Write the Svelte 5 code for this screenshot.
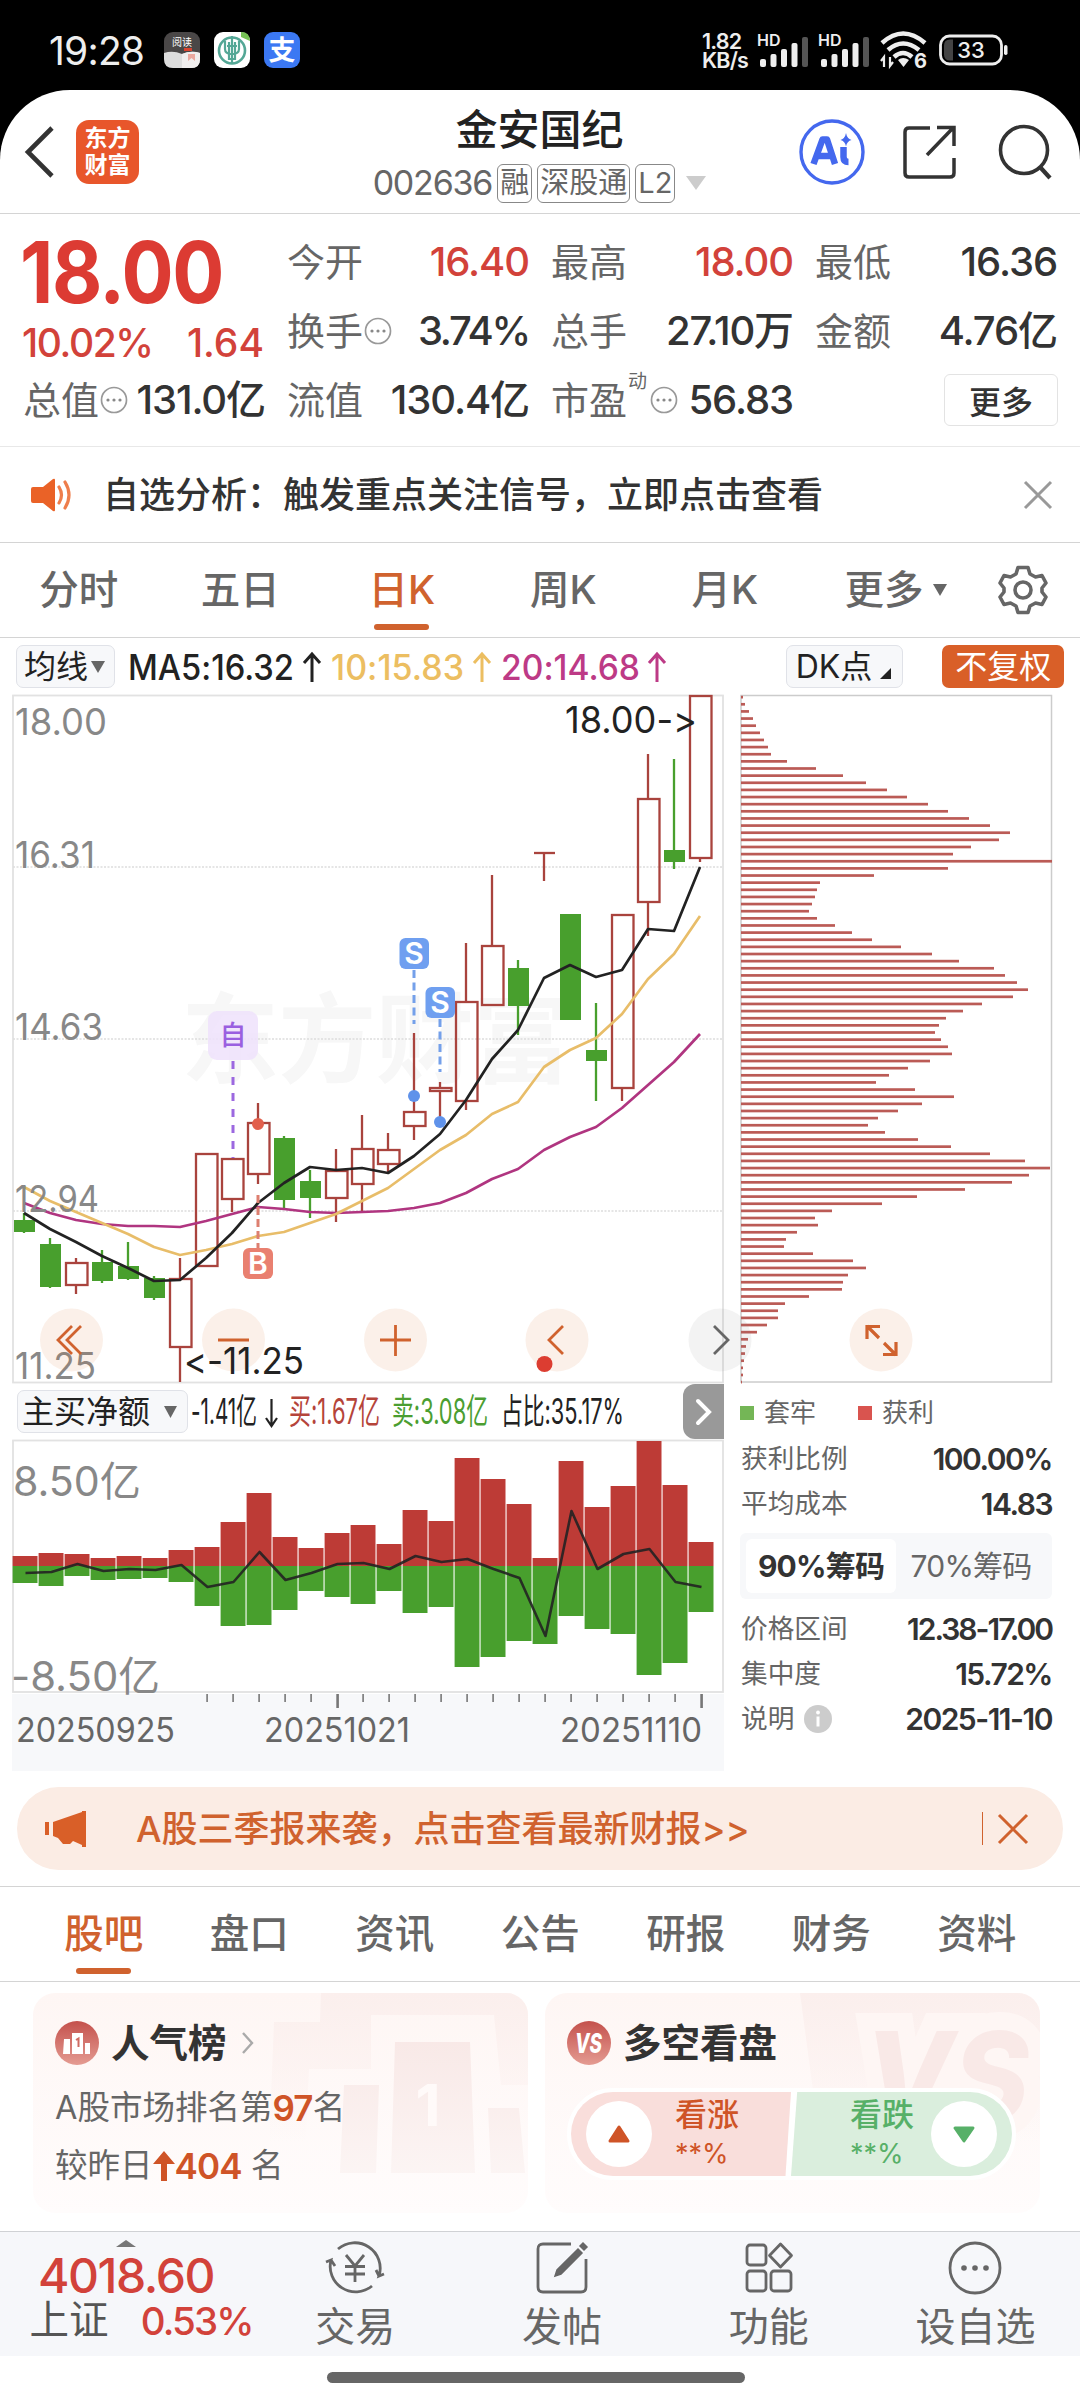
<script>
  const GREEN = '#489f2d';
  const RED = '#a9433d';

  const kTabs = ['分时', '五日', '日K', '周K', '月K'];
  const infoTabs = ['股吧', '盘口', '资讯', '公告', '研报', '财务', '资料'];

  // [up, high, top, bottom, low]
  const candles = [
    [0, 1213, 1220, 1232, 1233],
    [0, 1238, 1244, 1287, 1288],
    [1, 1258, 1262, 1286, 1294],
    [0, 1250, 1262, 1281, 1283],
    [0, 1242, 1266, 1279, 1280],
    [0, 1276, 1278, 1298, 1300],
    [1, 1258, 1278, 1348, 1382],
    [1, 1153, 1153, 1267, 1267],
    [1, 1158, 1158, 1200, 1212],
    [1, 1103, 1122, 1175, 1184],
    [0, 1136, 1138, 1200, 1209],
    [0, 1170, 1181, 1198, 1218],
    [1, 1149, 1170, 1199, 1222],
    [1, 1115, 1148, 1185, 1212],
    [1, 1133, 1149, 1165, 1173],
    [1, 1033, 1111, 1127, 1140],
    [1, 1082, 1087, 1092, 1123],
    [1, 943, 1001, 1102, 1110],
    [1, 875, 945, 1006, 1006],
    [0, 960, 968, 1006, 1035],
    [1, 853, 853, 853, 881],
    [0, 914, 914, 1020, 1020],
    [0, 1003, 1050, 1061, 1101],
    [1, 914, 914, 1089, 1101],
    [1, 754, 798, 903, 936],
    [0, 759, 850, 862, 869],
    [1, 695, 695, 859, 862]
  ];

  const ma5 = [1213, 1229, 1242, 1256, 1268, 1281, 1280, 1258, 1233, 1203, 1183, 1167, 1170, 1168, 1173, 1156, 1134, 1100, 1059, 1030, 978, 965, 977, 970, 929, 931, 867];
  const ma10 = [1187, 1201, 1212, 1223, 1234, 1247, 1255, 1250, 1244, 1236, 1232, 1223, 1214, 1201, 1188, 1169, 1150, 1135, 1114, 1102, 1067, 1050, 1038, 1014, 979, 954, 916];
  const ma20 = [1203, 1213, 1220, 1224, 1226, 1226, 1227, 1221, 1214, 1207, 1209, 1212, 1213, 1212, 1211, 1208, 1203, 1193, 1179, 1169, 1150, 1137, 1127, 1108, 1085, 1062, 1034];

  const chips = [
    2, 4, 8, 12, 15, 19, 23, 27, 30, 46, 75, 102, 125, 146, 166, 187, 207, 228, 249, 269, 258, 230, 212, 311, 207,
    133, 79, 76, 74, 71, 68, 76, 94, 111, 131, 160, 191, 218, 253, 264, 276, 287, 272, 241, 222, 205, 198, 194, 200,
    207, 211, 189, 167, 148, 135, 174, 213, 181, 157, 137, 127, 144, 177, 210, 249, 284, 309, 288, 271, 224, 176,
    141, 91, 74, 77, 56, 45, 43, 72, 112, 125, 107, 102, 101, 68, 44, 37, 37, 26, 16, 7, 5, 4, 3, 2, 2, 1
  ];

  const buy = [10, 13, 12, 8, 10, 8, 16, 19, 44, 73, 29, 18, 33, 41, 22, 56, 45, 108, 87, 62, 8, 105, 59, 80, 125, 81, 24];
  const sell = [17, 20, 10, 14, 13, 12, 16, 40, 60, 59, 44, 25, 31, 38, 25, 47, 41, 101, 91, 75, 78, 50, 63, 68, 109, 97, 46];
  const net = [7, 6, -2, 5, 3, 4, -1, 21, 16, -14, 14, 7, -2, -3, 3, -10, -4, -7, 3, 12, 70, -55, 3, -12, -17, 16, 21];
  const ZERO = 1566;

  const cx = (i) => 24 + 26 * i;
  const line = (ys) => ys.map((y, i) => cx(i) + ',' + y).join(' ');

  const axis = [['18.00', 735, 90], ['16.31', 868, 78], ['14.63', 1039.5, 86], ['12.94', 1211.5, 82], ['11.25', 1379, 79]];
</script>

{#snippet dots()}
  <svg class="dots" width="28" height="28" viewBox="0 0 28 28">
    <circle cx="14" cy="14" r="12.5" fill="none" stroke="#999" stroke-width="1.7" />
    <circle cx="8" cy="14" r="1.6" fill="#888" /><circle cx="14" cy="14" r="1.6" fill="#888" /><circle cx="20" cy="14" r="1.6" fill="#888" />
  </svg>
{/snippet}

{#snippet signal()}
  <svg width="52" height="36" viewBox="0 0 52 36">
    <text x="-1" y="13.500" class="hd">HD</text>
    <g fill="#eee">
      <rect x="2" y="27" width="6" height="8" rx="2" /><rect x="12.500" y="22" width="6" height="13" rx="2" />
      <rect x="23" y="17" width="6" height="18" rx="2" /><rect x="33.500" y="11" width="6" height="24" rx="2" />
      <rect x="44" y="5" width="6" height="30" rx="2" fill="#555" />
    </g>
  </svg>
{/snippet}

<div class="phone">
  <div class="status">
    <span class="time">19:28</span>
    <div class="apps">
      <svg width="36" height="36" viewBox="0 0 36 36">
        <rect width="36" height="36" rx="9" fill="#4a4747" />
        <path d="M0 21Q9 18 18 22Q27 18 36 21V27Q36 36 27 36H9Q0 36 0 27Z" fill="#ddd" />
        <path d="M18 22Q27 18 36 21V27Q36 36 27 36H18Z" fill="#f0eeee" />
        <path d="M24 22h7v7l-3.500-3l-3.500 3z" fill="#eba9a0" />
        <text x="18" y="14" text-anchor="middle" font-size="10" fill="#fff">阅读</text>
        <rect x="20" y="16" width="8" height="3" fill="#d8432f" />
      </svg>
      <svg width="36" height="36" viewBox="0 0 36 36">
        <rect width="36" height="36" rx="9" fill="#fff" />
        <path d="M27 0Q36 0 36 9L27 5Z" fill="#77c255" />
        <circle cx="18" cy="18.500" r="13" fill="none" stroke="#54a796" stroke-width="2.600" />
        <path d="M18 4v28M11 9v8q0 5 7 5q7 0 7-5V9M13 14h10M15 10v17h6V10" fill="none" stroke="#54a796" stroke-width="2.200" />
      </svg>
      <svg width="36" height="36" viewBox="0 0 36 36">
        <rect width="36" height="36" rx="9" fill="#3b78f3" />
        <text x="18" y="28" text-anchor="middle" font-size="27" font-weight="700" fill="#fff">支</text>
      </svg>
    </div>
    <div class="speed"><span>1.82</span><span>KB/s</span></div>
    <div class="sig">{@render signal()}</div>
    <div class="sig">{@render signal()}</div>
    <svg class="wifi" width="50" height="38" viewBox="0 0 50 38">
      <g fill="none" stroke="#eee" stroke-width="4.500">
        <path d="M2 12Q23 -7 45 12" /><path d="M8 19Q23 6 39 19" /><path d="M14 26Q23 18 32 26" />
      </g>
      <path d="M18 29q5-4 11 0l-5.500 7z" fill="#eee" />
      <path d="M4 36V26l-3 4M10 26v9l3-4" fill="none" stroke="#eee" stroke-width="2.200" />
      <text x="34" y="37" class="six">6</text>
    </svg>
    <svg class="battery" width="70" height="32" viewBox="0 0 70 32">
      <rect x="1.500" y="2" width="61" height="28" rx="9" fill="none" stroke="#eee" stroke-width="2.800" />
      <path d="M14 5.500v21h-3q-6 0-6-6v-9q0-6 6-6z" fill="#444" />
      <rect x="65" y="11" width="3.500" height="10" rx="1.700" fill="#eee" />
      <text x="32" y="24" text-anchor="middle" class="batt">33</text>
    </svg>
  </div>

  <div class="sheet">
    <header>
      <svg class="back" width="30" height="52" viewBox="0 0 30 52"><path d="M28 2L4 26L28 50" fill="none" stroke="#333" stroke-width="4.600" /></svg>
      <div class="logo"><span>东方</span><span>财富</span></div>
      <div class="name">
        <h1>金安国纪</h1>
        <div class="code">
          <span class="num">002636</span>
          <span class="tag">融</span><span class="tag">深股通</span><span class="tag">L2</span>
          <svg width="20" height="14" viewBox="0 0 20 14"><path d="M0 0h20L10 14z" fill="#ccc" /></svg>
        </div>
      </div>
      <svg class="ai" width="66" height="66" viewBox="0 0 66 66">
        <circle cx="33" cy="33" r="31" fill="none" stroke="#4468ee" stroke-width="3.400" />
        <path d="M14.500 45L23.500 20.500h4.500L36 45M19 37h14" fill="none" stroke="#4468ee" stroke-width="6.500" stroke-linejoin="round" />
        <path d="M44.500 28v10q0 5 5 5" fill="none" stroke="#4468ee" stroke-width="6.500" />
        <path d="M47 14q1 5.500 5.500 7q-4.500 1-5.500 6.500q-1-5.500-5.500-6.500q4.500-1.500 5.500-7z" fill="#4468ee" />
      </svg>
      <svg class="share" width="56" height="56" viewBox="0 0 56 56">
        <path d="M28 4H7Q3 4 3 8V49Q3 53 7 53H48Q52 53 52 49V34M25 31L51 4M35 3.500H52V22" fill="none" stroke="#333" stroke-width="3.500" />
      </svg>
      <svg class="search" width="58" height="56" viewBox="0 0 58 56">
        <circle cx="27" cy="26" r="23.500" fill="none" stroke="#333" stroke-width="3.600" /><path d="M43 43L53 54" stroke="#333" stroke-width="4.200" />
      </svg>
    </header>

    <section class="quote">
      <div class="col">
        <div class="price">18.00</div>
        <div class="chg red"><span>10.02%</span><span class="diff">1.64</span></div>
        <div class="row"><span class="lb">总值</span>{@render dots()}<b>131.0亿</b></div>
      </div>
      <div class="col">
        <div class="row"><span class="lb">今开</span><b class="red">16.40</b></div>
        <div class="row"><span class="lb">换手</span>{@render dots()}<b class="pc">3.74%</b></div>
        <div class="row"><span class="lb">流值</span><b>130.4亿</b></div>
      </div>
      <div class="col">
        <div class="row"><span class="lb">最高</span><b class="red">18.00</b></div>
        <div class="row"><span class="lb">总手</span><b>27.10万</b></div>
        <div class="row"><span class="lb">市盈</span><sup>动</sup>{@render dots()}<b>56.83</b></div>
      </div>
      <div class="col">
        <div class="row"><span class="lb">最低</span><b>16.36</b></div>
        <div class="row"><span class="lb">金额</span><b>4.76亿</b></div>
        <div class="row"><button class="more">更多</button></div>
      </div>
    </section>

    <section class="notice">
      <svg width="42" height="34" viewBox="0 0 42 34">
        <path d="M2 9h10L22 1q2-1 2 1v30q0 2-2 1L12 25H2q-2 0-2-2V11q0-2 2-2z" fill="#ea6227" />
        <path d="M28 9q5 8 0 16M34 4q8 13 0 26" fill="none" stroke="#ee7d4b" stroke-width="3.200" stroke-linecap="round" />
      </svg>
      <span>自选分析：触发重点关注信号，立即点击查看</span>
      <svg width="28" height="28" viewBox="0 0 28 28"><path d="M1 1L27 27M27 1L1 27" stroke="#999" stroke-width="3" /></svg>
    </section>

    <nav class="ktabs">
      {#each kTabs as t}
        <div class="ktab" class:on={t === '日K'}>{t}</div>
      {/each}
      <div class="ktab drop">更多<svg width="14" height="12" viewBox="0 0 14 12"><path d="M0 0h14L7 12z" fill="#666" /></svg></div>
      <svg class="gear" width="50" height="50" viewBox="0 0 50 50">
        <g fill="none" stroke="#666" stroke-width="3.600" stroke-linejoin="round">
          <path d="M20 2.500H30L32 9L37.500 12L44 10.500L48 18L44 23V27L48 32L44 39.500L37.500 38L32 41L30 47.500H20L18 41L12.500 38L6 39.500L2 32L6 27V23L2 18L6 10.500L12.500 12L18 9Z" />
          <circle cx="25" cy="25" r="8" />
        </g>
      </svg>
    </nav>

    <div class="tools">
      <span class="btn avg">均线<svg width="14" height="12" viewBox="0 0 14 12"><path d="M0 0h14L7 12z" fill="#666" /></svg></span>
      <svg class="ma" width="560" height="44" viewBox="0 0 560 44">
        <g class="matext">
          <text x="0" y="35" fill="#222" textLength="166" lengthAdjust="spacingAndGlyphs">MA5:16.32</text>
          <text x="203" y="35" fill="#ecbe61" textLength="133" lengthAdjust="spacingAndGlyphs">10:15.83</text>
          <text x="373" y="35" fill="#bd3a86" textLength="139" lengthAdjust="spacingAndGlyphs">20:14.68</text>
        </g>
        <g fill="none" stroke-width="3">
          <path d="M184 37V10M176 18L184 9L192 18" stroke="#222" />
          <path d="M354 37V10M346 18L354 9L362 18" stroke="#ecbe61" />
          <path d="M529 37V10M521 18L529 9L537 18" stroke="#bd3a86" />
        </g>
      </svg>
      <span class="btn dk">DK点<svg width="11" height="11" viewBox="0 0 11 11"><path d="M11 0V11H0z" fill="#222" /></svg></span>
      <span class="btn fq">不复权</span>
    </div>

    <svg class="chart" width="1080" height="694" viewBox="0 690 1080 694">
      <text x="181" y="1075" class="mark" textLength="390">东方财富</text>
      <rect x="13" y="695.500" width="710" height="687" fill="none" stroke="#e2e2e2" stroke-width="1.800" />
      {#each [867, 1039, 1211] as y}
        <line x1="13" x2="723" y1={y} y2={y} stroke="#ddd" stroke-width="1.300" stroke-dasharray="2 1.500" />
      {/each}

      {#each candles as [up, high, top, bottom, low], i}
        <g stroke={up ? RED : GREEN} stroke-width="2.300">
          <line x1={cx(i)} x2={cx(i)} y1={high} y2={top} />
          <line x1={cx(i)} x2={cx(i)} y1={bottom} y2={low} />
          {#if top === bottom}
            <line x1={cx(i) - 10} x2={cx(i) + 11} y1={top} y2={top} />
          {:else if up}
            <rect x={cx(i) - 10} y={top + 1} width="21.500" height={bottom - top - 2} fill="none" />
          {:else}
            <rect x={cx(i) - 10} y={top} width="21" height={bottom - top} fill={GREEN} stroke="none" />
          {/if}
        </g>
      {/each}

      <g fill="none" stroke-width="2.700" stroke-linejoin="round">
        <polyline points={line(ma20)} stroke="#b03580" />
        <polyline points={line(ma10)} stroke="#e8bd69" />
        <polyline points={line(ma5)} stroke="#222" />
      </g>

      {#each axis as [t, y, w]}
        <text x="15" {y} class="axis" textLength={w + 2} lengthAdjust="spacingAndGlyphs">{t}</text>
      {/each}

      <!-- trade marks -->
      <g stroke-dasharray="8 8" stroke-width="3">
        <line x1="233" x2="233" y1="1061" y2="1158" stroke="#9c68e0" />
        <line x1="258" x2="258" y1="1195" y2="1248" stroke="#dd7f70" stroke-dasharray="8 4" />
        <line x1="414" x2="414" y1="970" y2="1024" stroke="#74a0ea" stroke-dasharray="8 4.500" />
        <line x1="440" x2="440" y1="1019" y2="1072" stroke="#74a0ea" stroke-dasharray="8 4.500" />
      </g>
      <rect x="208" y="1011" width="50" height="49" rx="9" fill="#eee2fc" opacity="0.850" />
      <text x="233" y="1045" text-anchor="middle" font-size="27" font-weight="500" fill="#9a5fe0">自</text>
      <rect x="399.500" y="938" width="29.500" height="31" rx="6" fill="#6f9ff0" />
      <text x="414" y="964" class="mk">S</text>
      <rect x="425.500" y="987" width="29.500" height="31" rx="6" fill="#6f9ff0" />
      <text x="440" y="1013" class="mk">S</text>
      <rect x="243" y="1248" width="30" height="31" rx="6" fill="#e98070" />
      <text x="258" y="1273.500" class="mk">B</text>
      <circle cx="414" cy="1096" r="6" fill="#5f92ea" /><circle cx="440" cy="1122" r="6" fill="#5f92ea" />
      <circle cx="258" cy="1124" r="6" fill="#e2604d" />

      <rect x="741" y="695.500" width="310.500" height="686.500" fill="none" stroke="#ccc" stroke-width="1.500" />
      {#each chips as w, i}
        <rect x="741" y={695.8 + 7.135 * i} width={w} height="2.700" fill="#bb5b56" />
      {/each}

      <!-- floating controls -->
      {#each [71.5, 233.5, 395.5, 557, 720, 881] as x}
        <circle cx={x} cy="1340" r="31.500" fill={x === 720 ? '#888' : '#db6b2c'} opacity="0.100" />
      {/each}
      <g fill="none" stroke="#d0622e" stroke-width="2.800">
        <path d="M72 1326L58 1340L72 1354M81 1326L67 1340L81 1354" />
        <path d="M218 1340H249M380 1340H411M395.500 1325V1356" />
        <path d="M563 1326L549 1340L563 1354" />
        <path d="M879 1338L867 1326M867 1339V1326.500H880M884 1343L896 1355M896 1342V1354.500H883" stroke-width="3.200" />
        <path d="M714 1326L728 1340L714 1354" stroke="#666" />
      </g>
      <circle cx="544.500" cy="1364" r="8" fill="#dc3d31" />
      <text x="565" y="732.500" class="hl" textLength="132" lengthAdjust="spacingAndGlyphs">18.00-&gt;</text>
      <text x="184" y="1374" class="hl" textLength="120" lengthAdjust="spacingAndGlyphs">&lt;-11.25</text>
    </svg>

    <div class="lower">
      <div class="left">
        <div class="subbar">
          <span class="btn sub">主买净额<svg width="13" height="12" viewBox="0 0 13 12"><path d="M0 0h13L6.500 12z" fill="#666" /></svg></span>
          <svg width="440" height="44" viewBox="0 0 440 44">
            <g class="flow">
              <text x="0" y="34" fill="#222" textLength="66" lengthAdjust="spacingAndGlyphs">-1.41亿</text>
              <text x="98" y="34" fill="#b5443a" textLength="91" lengthAdjust="spacingAndGlyphs">买:1.67亿</text>
              <text x="201" y="34" fill="#4b9e31" textLength="96" lengthAdjust="spacingAndGlyphs">卖:3.08亿</text>
              <text x="310" y="34" fill="#222" textLength="123" lengthAdjust="spacingAndGlyphs">占比:35.17%</text>
            </g>
            <path d="M80.500 9V35M75 28L80.500 36L86 28" fill="none" stroke="#222" stroke-width="2.200" />
          </svg>
          <span class="next"><svg width="18" height="28" viewBox="0 0 18 28"><path d="M3 3L14 14L3 25" fill="none" stroke="#fff" stroke-width="4" stroke-linecap="round" /></svg></span>
        </div>
        <svg class="vol" width="724" height="332" viewBox="0 1439 724 332">
          <rect x="13" y="1440.500" width="710" height="251.500" fill="none" stroke="#e2e2e2" stroke-width="1.800" />
          <rect x="12" y="1694" width="712" height="77" fill="#f7f8fa" />
          {#each buy as b, i}
            <rect x={12.6 + 26 * i} y={ZERO - b} width="24.900" height={b} fill="#bd3b36" />
            <rect x={12.6 + 26 * i} y={ZERO} width="24.900" height={sell[i]} fill={GREEN} />
          {/each}
          <polyline points={line(net.map((n) => ZERO + n))} transform="translate(1.500 0)" fill="none" stroke="#222" stroke-opacity="0.900" stroke-width="2.600" stroke-linejoin="round" />
          {#each Array(20) as _, n}
            {@const big = n === 5 || n === 19}
            <rect x={cx(n + 7) + 0.3} y="1694" width={big ? 2.6 : 1.6} height={big ? 14 : 8} fill="#777" />
          {/each}
          <text x="13" y="1496" class="axis big" textLength="128" lengthAdjust="spacingAndGlyphs">8.50亿</text>
          <text x="11" y="1691" class="axis big" textLength="149" lengthAdjust="spacingAndGlyphs">-8.50亿</text>
          <g class="dates">
            <text x="16" y="1742" textLength="159" lengthAdjust="spacingAndGlyphs">20250925</text>
            <text x="264" y="1742" textLength="146" lengthAdjust="spacingAndGlyphs">20251021</text>
            <text x="560" y="1742" textLength="142" lengthAdjust="spacingAndGlyphs">20251110</text>
          </g>
        </svg>
      </div>
      <div class="stats">
        <div class="legend"><i class="g"></i><span>套牢</span><i class="r"></i><span>获利</span></div>
        <div class="stat"><span>获利比例</span><b>100.00%</b></div>
        <div class="stat"><span>平均成本</span><b>14.83</b></div>
        <div class="seg"><span class="sel">90%筹码</span><span>70%筹码</span></div>
        <div class="stat"><span>价格区间</span><b class="range">12.38-17.00</b></div>
        <div class="stat"><span>集中度</span><b>15.72%</b></div>
        <div class="stat">
          <span>说明</span>
          <svg width="28" height="28" viewBox="0 0 28 28"><circle cx="14" cy="14" r="14" fill="#ccc" /><path d="M14 11.500V21.500" stroke="#fff" stroke-width="3" /><circle cx="14" cy="7.500" r="1.900" fill="#fff" /></svg>
          <b>2025-11-10</b>
        </div>
      </div>
    </div>

    <div class="banner">
      <svg width="42" height="38" viewBox="0 0 42 38">
        <path d="M0 12h4v13H0zM8 12L37 2V1h4v36h-4v-2L28 31L25 34H18L13 28L8 26z" fill="#d95f28" />
      </svg>
      <span>A股三季报来袭，点击查看最新财报&gt;&gt;</span>
      <i></i>
      <svg width="30" height="30" viewBox="0 0 30 30"><path d="M1 1L29 29M29 1L1 29" stroke="#d0622e" stroke-width="3" /></svg>
    </div>

    <nav class="itabs">
      {#each infoTabs as t, i}
        <div class="itab" class:on={i === 0}>{t}</div>
      {/each}
    </nav>

    <section class="cards">
      <div class="card">
        <svg class="deco" width="260" height="220" viewBox="0 0 260 220">
          <defs>
            <linearGradient id="halo" gradientUnits="userSpaceOnUse" x1="0" y1="0" x2="0" y2="150"><stop offset="0" stop-color="#fbefed" /><stop offset="1" stop-color="#fbefed" stop-opacity="0" /></linearGradient>
            <linearGradient id="bars" gradientUnits="userSpaceOnUse" x1="0" y1="40" x2="0" y2="185"><stop offset="0" stop-color="#f8e8e6" /><stop offset="1" stop-color="#fcf5f4" /></linearGradient>
          </defs>
          <path d="M53 0H260V92H233L226 22H103V76H41L36 180H0L6 29H52z" fill="url(#halo)" />
          <path d="M76 92H111L108 180H72zM127 49H202L207 180H123zM220 115H251L257 180H223z" fill="url(#bars)" />
          <text x="160" y="133" class="one">1</text>
        </svg>
        <div class="head">
          <svg width="44" height="44" viewBox="0 0 44 44">
            <circle cx="22" cy="22" r="22" fill="url(#badge)" />
            <path d="M9 18h6v15H8zM17 12h11v21H17zM30 22h5v11h-5z" fill="#fff" />
            <path d="M21 19l2.500-1.500V26" fill="none" stroke="#cf6b62" stroke-width="2" />
          </svg>
          <h2>人气榜</h2>
          <svg width="14" height="22" viewBox="0 0 14 22"><path d="M2 1L11 11L2 21" fill="none" stroke="#aaa" stroke-width="2.400" /></svg>
        </div>
        <p>A股市场排名第<em>97</em>名</p>
        <p>较昨日<svg width="22" height="30" viewBox="0 0 22 30"><path d="M11 0L22 13H14V30H8V13H0z" fill="#cf5427" /></svg><em>404</em> 名</p>
      </div>
      <div class="card">
        <svg class="deco" width="260" height="220" viewBox="0 0 260 220">
          <path d="M20 0H260V150H40z" fill="url(#halo)" />
          <text x="84" y="128" class="vsbg" textLength="165" lengthAdjust="spacingAndGlyphs">VS</text>
        </svg>
        <div class="head">
          <svg width="44" height="44" viewBox="0 0 44 44">
            <defs>
              <linearGradient id="badge" x1="0" y1="0" x2="0" y2="1"><stop offset="0" stop-color="#c4514c" /><stop offset="1" stop-color="#e49b92" /></linearGradient>
            </defs>
            <circle cx="22" cy="22" r="22" fill="url(#badge)" />
            <text x="8" y="32" class="vs" textLength="27" lengthAdjust="spacingAndGlyphs">VS</text>
          </svg>
          <h2>多空看盘</h2>
        </div>
        <div class="poll">
          <div class="up"><span class="dot"><svg width="22" height="18" viewBox="0 0 22 18"><path d="M11 2L20 16H2z" fill="#cf5427" stroke="#cf5427" stroke-linejoin="round" stroke-width="3" /></svg></span><div><b>看涨</b><b class="pct">**%</b></div></div>
          <div class="down"><div><b>看跌</b><b class="pct">**%</b></div><span class="dot"><svg width="22" height="18" viewBox="0 0 22 18"><path d="M11 16L20 3H2z" fill="#57b068" stroke="#57b068" stroke-linejoin="round" stroke-width="3" /></svg></span></div>
        </div>
      </div>
    </section>

    <footer>
      <div class="index">
        <svg width="20" height="7" viewBox="0 0 20 7"><path d="M10 0L20 7H0z" fill="#777" /></svg>
        <div class="pt">4018.60</div>
        <div class="sh"><span>上证</span><b>0.53%</b></div>
      </div>
      <div class="act">
        <svg width="60" height="54" viewBox="0 0 60 54">
          <g fill="none" stroke="#666" stroke-width="2.800">
            <path d="M13 8A25.500 25.500 0 0 1 54 35L59 33M47 45A25.500 25.500 0 0 1 6 19L1 21M6 19L10 25M54 35L51 29" />
            <path d="M21 14L30 25L39 14M30 25V41M20 25.500H40M20 33H40" />
          </g>
        </svg>
        <span>交易</span>
      </div>
      <div class="act">
        <svg width="54" height="54" viewBox="0 0 54 54">
          <path d="M36 3H8Q3 3 3 8V46Q3 51 8 51H46Q51 51 51 46V18" fill="none" stroke="#666" stroke-width="2.800" />
          <path d="M43 8L47 12L26 33L20 35L22 29zM45 5L48 2L52 6L49 9z" fill="#666" stroke="#666" stroke-width="1.500" />
        </svg>
        <span>发帖</span>
      </div>
      <div class="act">
        <svg width="50" height="54" viewBox="0 0 50 54">
          <g fill="none" stroke="#666" stroke-width="2.800" stroke-linejoin="round">
            <rect x="3" y="4" width="19" height="20" rx="3" /><rect x="3" y="30" width="19" height="20" rx="3" /><rect x="27" y="30" width="20" height="20" rx="3" />
            <path d="M36.500 3L47.500 14.500L36.500 26L25.500 14.500z" />
          </g>
        </svg>
        <span>功能</span>
      </div>
      <div class="act">
        <svg width="54" height="54" viewBox="0 0 54 54">
          <circle cx="27" cy="27" r="25" fill="none" stroke="#666" stroke-width="2.800" />
          <circle cx="16" cy="27" r="2.800" fill="#666" /><circle cx="27" cy="27" r="2.800" fill="#666" /><circle cx="38" cy="27" r="2.800" fill="#666" />
        </svg>
        <span>设自选</span>
      </div>
    </footer>
    <div class="home"></div>
  </div>
</div>

<style>
  :global(body) {
    background: #000;
  }
  .phone {
    width: 1080px;
    height: 2400px;
    overflow: hidden;
    background: #000;
    color: #333;
    font-family: Inter, "Noto Sans CJK SC", sans-serif;
    font-feature-settings: "calt" 0;
    line-height: 1;
  }
  .phone * {
    box-sizing: border-box;
  }
  svg {
    display: block;
    flex: none;
    overflow: visible;
  }
  .red {
    color: #d2423a;
  }

  .status {
    display: flex;
    align-items: center;
    height: 90px;
    padding: 10px 71px 0 49px;
    color: #eee;
  }
  .time {
    width: 115px;
    font-size: 39px;
    letter-spacing: -0.8px;
  }
  .apps {
    display: flex;
    gap: 14px;
    flex: 1;
  }
  .speed {
    display: flex;
    flex-direction: column;
    gap: 1px;
    width: 56px;
    font-size: 21.5px;
    font-weight: 600;
    line-height: 18px;
    letter-spacing: -0.8px;
    white-space: nowrap;
  }
  .sig {
    width: 61px;
  }
  .hd {
    font-size: 16px;
    font-weight: 600;
    fill: #eee;
  }
  .six {
    font-size: 20px;
    font-weight: 700;
    fill: #eee;
  }
  .wifi {
    margin-right: 9px;
  }
  .batt {
    font-size: 22px;
    font-weight: 500;
    fill: #eee;
  }

  .sheet {
    height: 2310px;
    background: #fff;
    border-radius: 70px 70px 0 0;
    overflow: hidden;
  }
  header {
    display: flex;
    align-items: center;
    height: 124px;
    padding: 0 25px 0 24px;
    border-bottom: 1.5px solid #d4d4d4;
  }
  .logo {
    display: flex;
    flex-direction: column;
    align-items: center;
    justify-content: center;
    width: 63px;
    height: 64px;
    margin-left: 22px;
    border-radius: 13px;
    background: #e8562b;
    color: #fff;
    font-size: 23px;
    font-weight: 700;
    line-height: 27px;
  }
  .name {
    flex: 1;
    padding-left: 141px;
    text-align: center;
  }
  h1 {
    margin: 3px 0 8px;
    font-size: 42px;
    font-weight: 500;
    line-height: 52px;
    color: #222;
  }
  .code {
    display: flex;
    align-items: center;
    justify-content: center;
    gap: 5px;
    font-size: 34px;
    color: #666;
    white-space: nowrap;
  }
  .num {
    letter-spacing: -1.2px;
  }
  .tag {
    height: 39px;
    padding: 0 2px;
    border: 1.5px solid #888;
    border-radius: 6px;
    font-size: 29px;
    line-height: 35px;
  }
  .code svg {
    margin-left: 6px;
  }
  .ai {
    margin-right: 37px;
  }
  .share {
    margin-right: 39px;
  }

  .quote {
    display: grid;
    grid-template-columns: repeat(4, 240px);
    gap: 24px;
    height: 233px;
    padding: 13px 24px 0;
    border-bottom: 1.5px solid #e8e8e8;
  }
  .row {
    display: flex;
    align-items: center;
    height: 69px;
    font-size: 38px;
    white-space: nowrap;
  }
  .lb {
    color: #666;
    margin-left: -1px;
  }
  .row b {
    margin-left: auto;
    font-size: 40px;
    font-weight: 500;
    letter-spacing: -1.1px;
    margin-right: -1px;
  }
  .row .pc {
    letter-spacing: -2.2px;
  }
  .dots {
    margin-left: 1px;
  }
  .price {
    width: 260px;
    height: 91px;
    margin-left: -4px;
    color: #dc3b33;
    font-size: 85px;
    font-weight: 700;
    line-height: 91px;
    letter-spacing: -1.5px;
    transform: scaleX(0.91);
    transform-origin: left;
  }
  .chg {
    display: flex;
    justify-content: space-between;
    align-items: center;
    height: 49px;
    margin: 0 0 -2px -2px;
    font-size: 39px;
    font-weight: 500;
    letter-spacing: -1.4px;
  }
  .diff {
    letter-spacing: 0;
  }
  sup {
    align-self: flex-start;
    margin: 7px 2px 0 1px;
    font-size: 19px;
    color: #666;
  }
  .more {
    width: 114px;
    height: 52px;
    margin: 0 -2px 0 auto;
    padding: 0;
    border: 1.5px solid #e3e3e3;
    border-radius: 6px;
    background: #fff;
    color: #333;
    font: 500 32px Inter, "Noto Sans CJK SC", sans-serif;
  }

  .notice {
    display: flex;
    align-items: center;
    height: 96px;
    padding: 0 28px 0 31px;
    border-bottom: 1.5px solid #d4d4d4;
    font-size: 36px;
    font-weight: 500;
  }
  .notice span {
    flex: 1;
    margin-left: 30px;
  }

  .ktabs {
    display: flex;
    align-items: center;
    height: 95px;
    padding-right: 32px;
    border-bottom: 1.5px solid #d4d4d4;
  }
  .ktab {
    position: relative;
    left: -2px;
    width: 161.5px;
    height: 94px;
    font-size: 39.5px;
    line-height: 94px;
    font-weight: 500;
    color: #666;
    text-align: center;
  }
  .on {
    color: #d0622e;
  }
  .on::after {
    content: "";
    position: absolute;
    left: 50%;
    bottom: 7px;
    width: 55px;
    height: 6px;
    margin-left: -28px;
    border-radius: 3px;
    background: #d0622e;
  }
  .drop {
    display: flex;
    align-items: center;
    gap: 9px;
    width: 190px;
    padding-left: 39px;
  }
  .gear {
    margin-left: auto;
  }

  .tools {
    display: flex;
    align-items: center;
    height: 52px;
    padding: 5px 16px 0;
  }
  .btn {
    display: flex;
    align-items: center;
    height: 43px;
    border: 1.5px solid #e0e2e8;
    border-radius: 7px;
    background: #f7f8fa;
    color: #222;
    font-size: 32px;
    white-space: nowrap;
  }
  .avg {
    width: 99px;
    gap: 3px;
    padding-left: 7px;
  }
  .ma {
    margin: 0 98px 0 13px;
  }
  .matext {
    font-size: 35px;
    font-weight: 500;
  }
  .dk {
    width: 118px;
    gap: 8px;
    padding-left: 9px;
  }
  .dk svg {
    margin-top: 14px;
  }
  .fq {
    width: 122px;
    margin-left: 39px;
    justify-content: center;
    border: 0;
    background: #d95f28;
    color: #fff;
  }

  .mark {
    font-size: 98px;
    font-weight: 700;
    fill: #f7f7f7;
  }
  .axis {
    font-size: 37px;
    fill: #888;
  }
  .big {
    font-size: 41px;
  }
  .hl {
    font-size: 37px;
    fill: #222;
  }
  .mk {
    font-size: 30px;
    font-weight: 600;
    fill: #fff;
    text-anchor: middle;
  }

  .lower {
    display: flex;
    height: 403px;
  }
  .subbar {
    display: flex;
    align-items: center;
    height: 55px;
    padding-left: 17px;
  }
  .sub {
    width: 171px;
    gap: 14px;
    margin-right: 3px;
    padding-left: 4px;
  }
  .flow {
    font-size: 35px;
  }
  .next {
    display: flex;
    align-items: center;
    justify-content: center;
    width: 41px;
    height: 55px;
    margin-left: 52px;
    border-radius: 12px 0 0 12px;
    background: #999;
  }
  .dates {
    font-size: 34.5px;
    fill: #666;
  }

  .stats {
    width: 312px;
    margin-left: 16px;
    padding-top: 5px;
    font-size: 26.7px;
    color: #666;
  }
  .legend {
    display: flex;
    align-items: center;
    height: 47px;
    font-size: 26px;
  }
  .legend i {
    width: 14px;
    height: 14px;
    margin-right: 10px;
  }
  .legend span {
    margin-right: 42px;
  }
  .g {
    background: #74b656;
  }
  .r {
    background: #d9544f;
  }
  .stat {
    display: flex;
    align-items: center;
    height: 45px;
    padding-left: 1px;
  }
  .stat svg {
    margin-left: 10px;
  }
  .stat b {
    margin-left: auto;
    font-size: 30px;
    font-weight: 600;
    color: #333;
    letter-spacing: -1.5px;
  }
  .stat .range {
    letter-spacing: -2px;
  }
  .seg {
    display: flex;
    height: 66px;
    margin: 7px 0;
    padding: 6px;
    border-radius: 6px;
    background: #f7f8fa;
    font-size: 30px;
    line-height: 54px;
    text-align: center;
  }
  .seg span {
    width: 150px;
    border-radius: 6px;
    letter-spacing: -0.8px;
  }
  .sel {
    background: #fff;
    color: #333;
    font-weight: 700;
  }

  .banner {
    display: flex;
    align-items: center;
    width: 1046px;
    height: 83px;
    margin: 0 17px 16px;
    padding: 0 35px 0 28px;
    border-radius: 42px;
    background: #fbece4;
    color: #d0622e;
    font-size: 36px;
    font-weight: 500;
  }
  .banner span {
    flex: 1;
    margin-left: 49px;
    padding-top: 1px;
  }
  .banner i {
    width: 1.5px;
    height: 33px;
    margin-right: 15px;
    background: #d0622e;
  }

  .itabs {
    display: flex;
    height: 96px;
    padding-left: 31px;
    border-top: 1.5px solid #d4d4d4;
    border-bottom: 1.5px solid #d4d4d4;
  }
  .itab {
    position: relative;
    width: 145.5px;
    font-size: 39.5px;
    line-height: 95px;
    font-weight: 500;
    color: #666;
    text-align: center;
  }
  .itab.on {
    color: #d0622e;
  }

  .cards {
    display: flex;
    gap: 17px;
    height: 249px;
    padding: 11px 0 0 33px;
  }
  .card {
    position: relative;
    width: 495px;
    height: 220px;
    padding: 28px 22px 0;
    border-radius: 22px;
    overflow: hidden;
    background: linear-gradient(#fef6f4, #fffcfc);
  }
  .deco {
    position: absolute;
    right: 0;
    top: 0;
  }
  .one {
    font-size: 58px;
    font-weight: 700;
    fill: #fffaf9;
    text-anchor: middle;
  }
  .vsbg {
    font-size: 124px;
    font-weight: 800;
    font-style: italic;
    fill: #f9e9e7;
    stroke: #fef6f4;
    stroke-width: 36px;
    paint-order: stroke;
  }
  .vs {
    font-size: 27px;
    font-weight: 800;
    font-style: italic;
    fill: #fff;
  }
  .head {
    position: relative;
    display: flex;
    align-items: center;
    height: 44px;
    margin-bottom: 14px;
  }
  h2 {
    margin: 0 14px 0 12px;
    font-size: 38.5px;
    font-weight: 700;
    color: #333;
  }
  p {
    position: relative;
    display: flex;
    align-items: center;
    height: 58px;
    margin: 0;
    font-size: 32.5px;
    color: #666;
    white-space: pre;
  }
  em {
    font-size: 35px;
    font-style: normal;
    font-weight: 600;
    color: #cf5427;
    letter-spacing: -0.8px;
  }
  .poll {
    position: relative;
    display: flex;
    width: 449px;
    height: 92px;
    margin-top: 23px;
    border: 4px solid #fff;
    border-radius: 46px;
    overflow: hidden;
    background: #fff;
  }
  .up,
  .down {
    display: flex;
    align-items: center;
    height: 84px;
  }
  .up {
    width: 220px;
    gap: 23px;
    padding-left: 15px;
    background: #f9dedb;
    clip-path: polygon(0 0, 100% 0, 97.5% 100%, 0 100%);
  }
  .down {
    width: 221px;
    justify-content: flex-end;
    gap: 17px;
    padding-right: 15px;
    background: #daeedd;
    clip-path: polygon(2.8% 0, 100% 0, 100% 100%, 0 100%);
  }
  .dot {
    display: flex;
    align-items: center;
    justify-content: center;
    width: 66px;
    height: 66px;
    border-radius: 50%;
    background: #fff;
  }
  .poll b {
    display: block;
    font-size: 32px;
    font-weight: 500;
    line-height: 40px;
    color: #cf5427;
  }
  .poll .pct {
    font-size: 27px;
    line-height: 38px;
    font-weight: 400;
  }
  .down b,
  .down .pct {
    color: #57b068;
  }

  footer {
    display: flex;
    height: 125px;
    border-top: 1.5px solid #d0d2d5;
    background: #f6f7fa;
  }
  .index {
    display: flex;
    flex-direction: column;
    align-items: center;
    width: 252px;
    padding-top: 8px;
    color: #d2423a;
  }
  .pt {
    margin: 4px 0 0;
    font-size: 48px;
    font-weight: 500;
    line-height: 50px;
    letter-spacing: -1.4px;
  }
  .sh {
    display: flex;
    align-items: center;
    justify-content: space-between;
    width: 223px;
    margin-left: 30px;
    font-size: 39.5px;
  }
  .sh span {
    color: #555;
  }
  .sh b {
    font-size: 38.5px;
    font-weight: 500;
    letter-spacing: -1.9px;
  }
  .act {
    display: flex;
    flex-direction: column;
    align-items: center;
    gap: 12px;
    width: 206.7px;
    padding-top: 9px;
    font-size: 40px;
    color: #666;
  }
  .home {
    width: 418px;
    height: 11px;
    margin: 16px 0 0 327px;
    border-radius: 6px;
    background: #666;
  }
</style>
